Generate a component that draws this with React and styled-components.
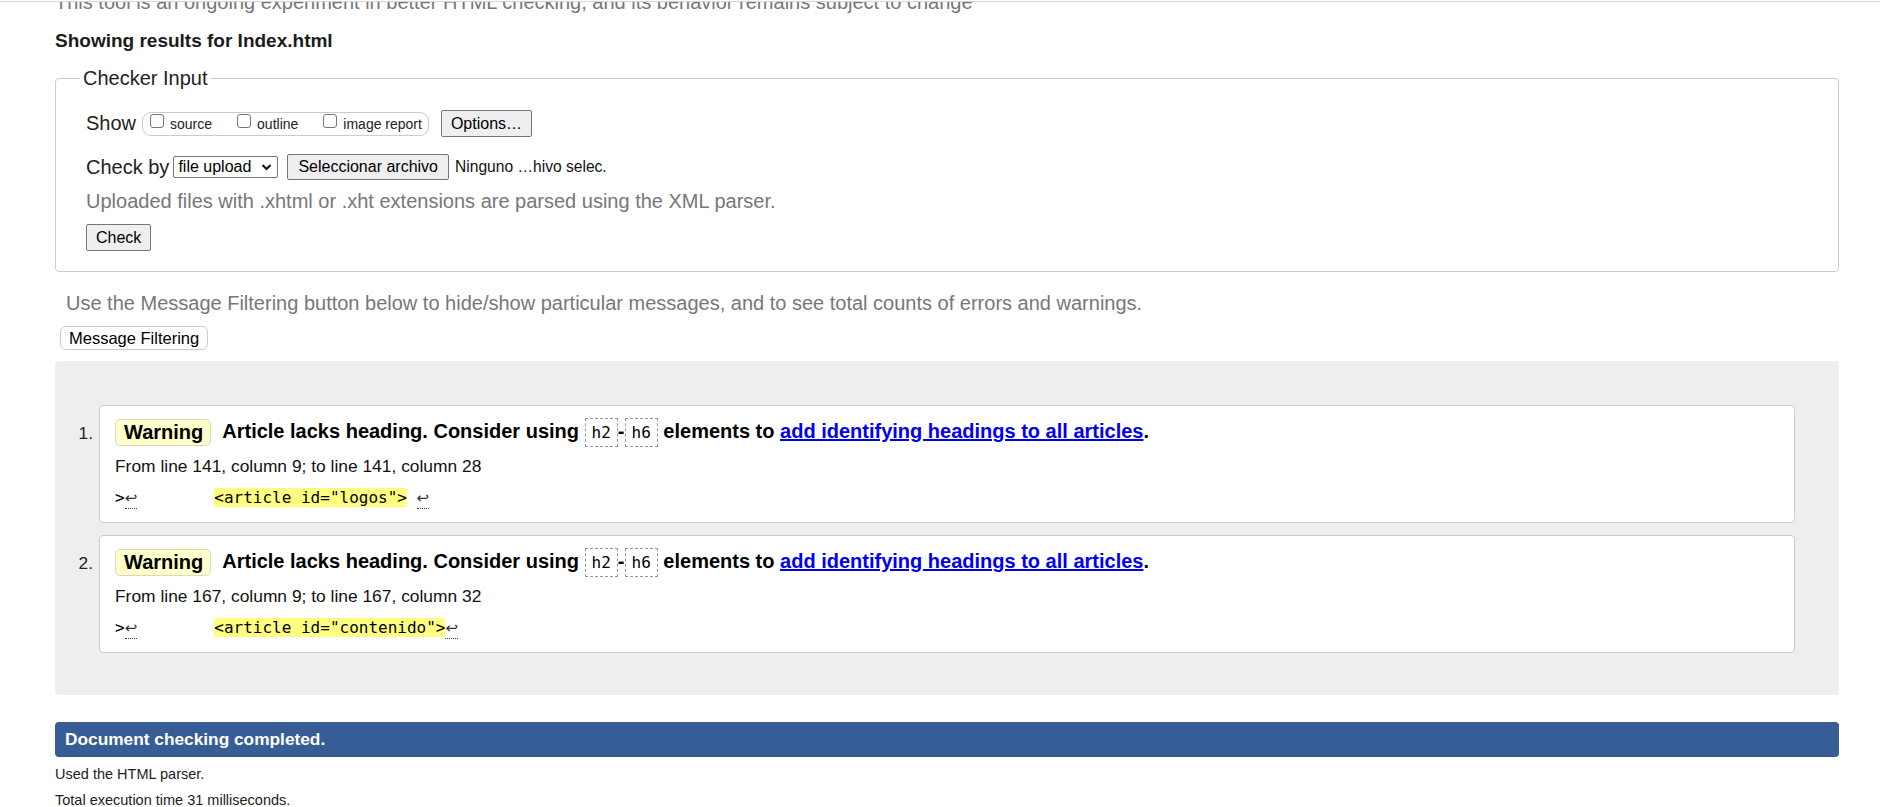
import React from "react";
import styled, { createGlobalStyle } from "styled-components";

const GlobalStyle = createGlobalStyle`
  html, body {
    margin: 0;
    padding: 0;
    background: #fff;
  }
  body {
    font-family: "Liberation Sans", Arial, sans-serif;
    color: #000;
  }
  * {
    box-sizing: border-box;
  }
`;

const Page = styled.div`
  margin-top: 1px;
  border-top: 1px solid #d6d6d6;
  padding: 0 41px 0 55px;
`;

// the intro line is scrolled mostly out of view
const Intro = styled.div`
  height: 12px;
  overflow: hidden;
  display: flex;
  align-items: flex-end;
  font-size: 20px;
  line-height: 23px;
  color: #777;
  white-space: nowrap;
`;

const Heading = styled.h2`
  margin: 16px 0 0;
  font-size: 19px;
  line-height: 22px;
  font-weight: bold;
  color: #1c1c1c;
`;

const Fieldset = styled.fieldset`
  margin: 14px 0 0;
  padding: 0 30px 20px;
  border: 1px solid #ccc;
  border-radius: 4px;
  min-width: 0;
`;

const Legend = styled.legend`
  margin-left: -6px;
  padding: 0 3px;
  font-size: 20px;
  line-height: 24px;
  color: #222;
`;

const FieldRow = styled.div`
  display: flex;
  align-items: center;
  height: ${(p) => p.$height}px;
  margin-top: ${(p) => p.$top}px;
  font-size: 20px;
  color: #222;
  white-space: nowrap;
`;

const CheckGroup = styled.div`
  display: flex;
  align-items: center;
  gap: 25px;
  height: 24px;
  margin-left: 6px;
  padding: 0 6px 0 7px;
  border: 1px solid #ccc;
  border-radius: 9px;
`;

const CheckLabel = styled.label`
  display: flex;
  align-items: center;
  gap: 6px;
  font-size: 14px;
  color: #222;
`;

const Box = styled.input.attrs({ type: "checkbox" })`
  appearance: none;
  margin: 0 0 5px;
  width: 14px;
  height: 14px;
  border: 1px solid #767676;
  border-radius: 3px;
  background: #fff;
`;

const NativeButton = styled.button`
  height: ${(p) => p.$height || 27}px;
  margin-left: ${(p) => p.$left || 0}px;
  padding: 0 ${(p) => p.$pad || 10}px;
  border: 1px solid #767676;
  border-radius: 2px;
  background: #efefef;
  font-family: "Liberation Sans", Arial, sans-serif;
  font-size: 16px;
  color: #000;
`;

const SelectBox = styled.div`
  display: flex;
  align-items: center;
  justify-content: space-between;
  width: 105px;
  height: 22px;
  margin-left: 4px;
  padding: 0 5px 0 4px;
  border: 1px solid #767676;
  border-radius: 2px;
  font-size: 16px;
  color: #000;
`;

const FileName = styled.span`
  margin-left: 6px;
  font-size: 15.6px;
  color: #111;
`;

const Note = styled.p`
  margin: ${(p) => p.$top}px 0 0;
  padding-left: ${(p) => p.$indent || 0}px;
  font-size: 20px;
  line-height: ${(p) => p.$line}px;
  color: #777;
`;

const FilterButton = styled.button`
  display: block;
  height: 24px;
  margin: 11px 0 0 5px;
  padding: 0 8px;
  border: 1px solid #ccc;
  border-radius: 6px;
  background: #fff;
  font-family: "Liberation Sans", Arial, sans-serif;
  font-size: 16.5px;
  color: #000;
`;

const Results = styled.div`
  margin-top: 11px;
  padding: 44px 44px 42px 0;
  background: #eee;
  border-radius: 4px;
`;

const List = styled.ol`
  display: flex;
  flex-direction: column;
  gap: 12px;
  margin: 0;
  padding: 0;
  list-style: none;
`;

const Item = styled.li`
  display: grid;
  grid-template-columns: 44px 1fr;
`;

const Num = styled.span`
  margin-top: 18px;
  padding-right: 6px;
  text-align: right;
  font-size: 17.3px;
  line-height: 20px;
  color: #222;
`;

const Card = styled.div`
  padding: 13px 16px 14px 15px;
  background: #fff;
  border: 1px solid #ccc;
  border-radius: 4px;
`;

const MsgRow = styled.div`
  display: flex;
  align-items: center;
  height: 27px;
  white-space: nowrap;
`;

const Badge = styled.strong`
  height: 27px;
  margin-right: 11px;
  padding: 0 7px 0 8px;
  background: #ffffcc;
  border: 1px solid #d9d9b8;
  border-radius: 5px;
  font-size: 20px;
  line-height: 25px;
`;

const MsgText = styled.span`
  font-size: 20px;
  font-weight: bold;
  color: #000;

  a {
    color: #0000ee;
    text-decoration: underline;
  }
`;

const Code = styled.code`
  display: inline-block;
  padding: 4px 6px;
  border: 1px dashed #999;
  font-family: "DejaVu Sans Mono", "Liberation Mono", monospace;
  font-size: 16px;
  font-weight: normal;
  line-height: 19px;
  vertical-align: middle;
`;

const Location = styled.p`
  margin: 10px 0 0;
  font-size: 17.4px;
  line-height: 20px;
  color: #111;
`;

const Extract = styled.code`
  display: block;
  margin-top: 12px;
  font-family: "DejaVu Sans Mono", "Liberation Mono", monospace;
  font-size: 16px;
  line-height: 20px;
  white-space: pre;
  color: #000;
`;

const Lf = styled.span`
  padding-bottom: 1px;
  border-bottom: 1px dotted #444;
  font-family: "DejaVu Sans", sans-serif;
  font-size: 15px;
  color: #333;
`;

const Mark = styled.b`
  font-weight: normal;
  background: #ffff80;
`;

const DoneBar = styled.div`
  display: flex;
  align-items: center;
  height: 35px;
  margin-top: 27px;
  padding: 0 10px;
  background: #365d95;
  border-radius: 4px;
  font-size: 17.3px;
  font-weight: bold;
  color: #fff;
`;

const Small = styled.p`
  margin: 8px 0 0;
  font-size: 14.5px;
  line-height: 18px;
  color: #222;
`;

const Chevron = () => (
  <svg width="11" height="8" viewBox="0 0 11 8" fill="none">
    <path d="M1.5 2l4 4 4-4" stroke="#111" strokeWidth="2" />
  </svg>
);

const messages = [
  {
    from: "From line 141, column 9; to line 141, column 28",
    extract: '<article id="logos">',
    tail: " ",
  },
  {
    from: "From line 167, column 9; to line 167, column 32",
    extract: '<article id="contenido">',
    tail: "",
  },
];

export default function App() {
  return (
    <>
      <GlobalStyle />
      <Page>
        <Intro>
          This tool is an ongoing experiment in better HTML checking, and its
          behavior remains subject to change
        </Intro>
        <Heading>Showing results for Index.html</Heading>

        <Fieldset>
          <Legend>Checker Input</Legend>
          <FieldRow $top={20} $height={27}>
            Show
            <CheckGroup>
              <CheckLabel>
                <Box />
                source
              </CheckLabel>
              <CheckLabel>
                <Box />
                outline
              </CheckLabel>
              <CheckLabel>
                <Box />
                image report
              </CheckLabel>
            </CheckGroup>
            <NativeButton $left={12} $pad={9}>
              Options…
            </NativeButton>
          </FieldRow>
          <FieldRow $top={17} $height={26}>
            Check by
            <SelectBox>
              file upload
              <Chevron />
            </SelectBox>
            <NativeButton $left={9} $height={26} $pad={10}>
              Seleccionar archivo
            </NativeButton>
            <FileName>Ninguno …hivo selec.</FileName>
          </FieldRow>
          <Note $top={10} $line={22}>
            Uploaded files with .xhtml or .xht extensions are parsed using the
            XML parser.
          </Note>
          <FieldRow $top={12} $height={27}>
            <NativeButton $pad={9}>Check</NativeButton>
          </FieldRow>
        </Fieldset>

        <Note $top={20} $line={23} $indent={11}>
          Use the Message Filtering button below to hide/show particular
          messages, and to see total counts of errors and warnings.
        </Note>
        <FilterButton>Message Filtering</FilterButton>

        <Results>
          <List>
            {messages.map((m, i) => (
              <Item key={i}>
                <Num>{i + 1}.</Num>
                <Card>
                  <MsgRow>
                    <Badge>Warning</Badge>
                    <MsgText>
                      Article lacks heading. Consider using <Code>h2</Code>-
                      <Code>h6</Code> elements to{" "}
                      <a href="#headings">
                        add identifying headings to all articles
                      </a>
                      .
                    </MsgText>
                  </MsgRow>
                  <Location>{m.from}</Location>
                  <Extract>
                    {">"}
                    <Lf>↩</Lf>
                    {"        "}
                    <Mark>{m.extract}</Mark>
                    {m.tail}
                    <Lf>↩</Lf>
                  </Extract>
                </Card>
              </Item>
            ))}
          </List>
        </Results>

        <DoneBar>Document checking completed.</DoneBar>
        <Small>Used the HTML parser.</Small>
        <Small>Total execution time 31 milliseconds.</Small>
      </Page>
    </>
  );
}
